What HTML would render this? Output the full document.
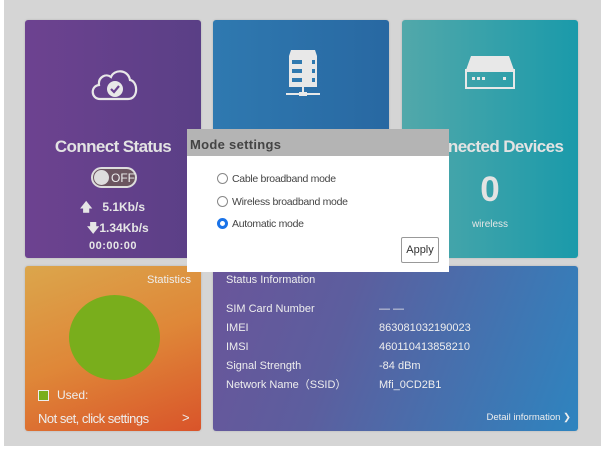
<!DOCTYPE html>
<html><head><meta charset="utf-8"><style>
*{margin:0;padding:0;box-sizing:border-box}
body{width:601px;height:450px;background:#fff;font-family:"Liberation Sans",sans-serif;position:relative;overflow:hidden}
.bg{position:absolute;left:4px;top:0;width:597px;height:446px;background:#d5d5d5}
.c{position:absolute;border-radius:3px;color:#eee;box-shadow:0 0 2px rgba(0,0,0,.15)}
.t{position:absolute;white-space:nowrap}
</style></head><body>
<div class="bg"></div>
<div class="c" style="left:25px;top:20px;width:176px;height:238px;background:linear-gradient(90deg,#6d4290,#5a3f86)">
 <svg class="t" style="left:63px;top:36px" width="52" height="50" viewBox="0 0 52 50"><path d="M12 43 C3 43 2 30 11 29 C10 21 18 17 23 21 C26 13 40 13 42 24 C50 25 51 43 40 43 Z" fill="none" stroke="#e8e8e8" stroke-width="2.2"/><circle cx="27" cy="33" r="8" fill="#e8e8e8"/><path d="M23 33 l3 3 l5 -6" fill="none" stroke="#6a4290" stroke-width="2.2"/></svg>
 <div class="t" style="left:0;width:176px;text-align:center;top:117px;font-size:17px;font-weight:bold;letter-spacing:-.6px;color:#e3e3e3">Connect Status</div>
 <div class="t" style="left:66px;top:147px;width:46px;height:21px;border-radius:11px;background:#6b5560;border:2px solid #ddd"><div style="position:absolute;left:1px;top:1px;width:15px;height:15px;border-radius:50%;background:#ddd"></div><span style="position:absolute;left:18px;top:2px;font-size:12px;color:#eee">OFF</span></div>
 <div class="t" style="left:55px;top:178px;font-size:12px;font-weight:bold;color:#e6e6e6">🡅&nbsp;&nbsp;&nbsp;5.1Kb/s</div>
 <div class="t" style="left:62px;top:199px;font-size:12px;font-weight:bold;color:#e6e6e6">🡇1.34Kb/s</div>
 <div class="t" style="left:0;width:176px;text-align:center;top:220px;font-size:11px;font-weight:bold;color:#e6e6e6;letter-spacing:.5px">00:00:00</div>
</div>
<div class="c" style="left:213px;top:20px;width:176px;height:238px;background:linear-gradient(90deg,#2f79b0,#2868a2)">
 <svg class="t" style="left:70px;top:28px" width="40" height="50" viewBox="0 0 40 50"><path d="M6 8 L8 2 H32 L34 8 Z" fill="#e8e8e8"/><rect x="6" y="8" width="28" height="31" fill="#e8e8e8"/><g fill="#2f79b0"><rect x="9" y="12" width="10" height="4"/><rect x="29" y="12" width="3" height="4"/><rect x="9" y="21" width="10" height="4"/><rect x="29" y="21" width="3" height="4"/><rect x="9" y="30" width="10" height="4"/><rect x="29" y="30" width="3" height="4"/></g><rect x="19" y="39" width="2" height="7" fill="#e8e8e8"/><rect x="3" y="45" width="34" height="2" fill="#e8e8e8"/><rect x="16" y="44" width="8" height="4" fill="#e8e8e8"/></svg>
</div>
<div class="c" style="left:402px;top:20px;width:176px;height:238px;background:linear-gradient(90deg,#52a8aa,#1a9aaa)">
 <svg class="t" style="left:63px;top:34px" width="50" height="38" viewBox="0 0 50 38"><path d="M6 2 H44 L49 16 H1 Z" fill="#e8e8e8"/><rect x="1" y="16" width="48" height="18" fill="none" stroke="#e8e8e8" stroke-width="2"/><rect x="1" y="16" width="48" height="2" fill="#e8e8e8"/><g fill="#e8e8e8"><rect x="7" y="23" width="3" height="3"/><rect x="12" y="23" width="3" height="3"/><rect x="17" y="23" width="3" height="3"/><rect x="38" y="23" width="3" height="3"/></g></svg>
 <div class="t" style="left:0;width:176px;text-align:center;top:117px;font-size:17px;font-weight:bold;letter-spacing:-.6px;color:#e3e3e3">Connected Devices</div>
 <div class="t" style="left:0;width:176px;text-align:center;top:150px;font-size:35px;font-weight:bold;color:#e3e3e3">0</div>
 <div class="t" style="left:0;width:176px;text-align:center;top:199px;font-size:10px;color:#e6e6e6">wireless</div>
</div>
<div class="c" style="left:25px;top:266px;width:176px;height:165px;background:linear-gradient(160deg,#dba64c,#df8738 50%,#d9542a)">
 <div class="t" style="right:10px;top:8px;font-size:11px">Statistics</div>
 <div class="t" style="left:44px;top:29px;width:91px;height:85px;border-radius:50%;background:#79ae1c"></div>
 <div class="t" style="left:13px;top:124px;width:11px;height:11px;background:#79ae1c;border:1px solid #eee"></div>
 <div class="t" style="left:32px;top:122px;font-size:12px">Used:</div>
 <div class="t" style="left:13px;top:145px;font-size:13px;letter-spacing:-.5px">Not set, click settings</div>
 <div class="t" style="left:157px;top:144px;font-size:13px">&gt;</div>
</div>
<div class="c" style="left:213px;top:266px;width:365px;height:165px;background:linear-gradient(110deg,#6a559a,#5c5e9e 35%,#2e84bf)">
 <div class="t" style="left:13px;top:8px;font-size:11px">Status Information</div>
 <div class="t" style="left:13px;top:34px;font-size:11px;line-height:19px">SIM Card Number<br>IMEI<br>IMSI<br>Signal Strength<br>Network Name（SSID）</div>
 <div class="t" style="left:166px;top:34px;font-size:11px;line-height:19px">— —<br>863081032190023<br>460110413858210<br>-84 dBm<br>Mfi_0CD2B1</div>
 <div class="t" style="right:7px;top:146px;font-size:9.5px">Detail information ❯</div>
</div>
<div style="position:absolute;left:187px;top:129px;width:262px;height:143px;background:#fff">
 <div style="height:27px;background:#b4b4b4;font-size:13px;font-weight:bold;color:#444;padding:8px 0 0 3px;letter-spacing:.3px">Mode settings</div>
 <div class="t" style="left:30px;top:39px;font-size:10.5px;color:#444;line-height:22.5px;letter-spacing:-.3px">
  <div><span style="display:inline-block;width:11px;height:11px;border:1px solid #888;border-radius:50%;vertical-align:-2px;margin-right:4px"></span>Cable broadband mode</div>
  <div><span style="display:inline-block;width:11px;height:11px;border:1px solid #888;border-radius:50%;vertical-align:-2px;margin-right:4px"></span>Wireless broadband mode</div>
  <div><span style="display:inline-block;width:11px;height:11px;border:3px solid #1a73e8;border-radius:50%;vertical-align:-2px;margin-right:4px;box-shadow:inset 0 0 0 1px #fff"></span>Automatic mode</div>
 </div>
 <div class="t" style="left:214px;top:108px;width:38px;height:26px;border:1px solid #999;border-radius:2px;font-size:11px;color:#333;text-align:center;line-height:24px">Apply</div>
</div>
</body></html>
